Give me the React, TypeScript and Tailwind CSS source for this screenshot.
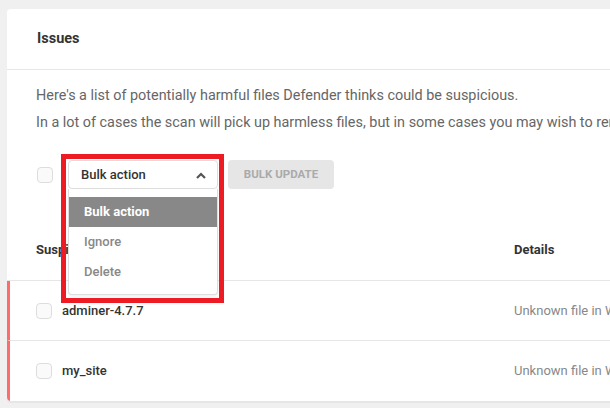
import React from 'react';

const font = { fontFamily: 'Roboto, "Liberation Sans", sans-serif' };

function Checkbox() {
  return <span className="block w-4 h-4 shrink-0 rounded-[4px] border border-[#dddddd] bg-[#fafafa]" />;
}

const ROWS = ['adminer-4.7.7', 'my_site'];

export default function App() {
  return (
    <div style={font} className="w-[610px] h-[408px] overflow-hidden bg-[#f0f0f0] pt-[9px] pl-[7px]">
      <div className="w-[660px] bg-white rounded-[4px] shadow-[0_2px_0_#e6e6e6]">
        <div className="h-[61px] flex items-center px-[30px] border-b border-[#e6e6e6]">
          <h2 className="text-[14.5px] font-bold text-[#333333]">Issues</h2>
        </div>

        <div className="pl-[29px] pt-[12px]">
          <p className="text-[14.4px] leading-[27px] text-[#666666] whitespace-nowrap">
            Here's a list of potentially harmful files Defender thinks could be suspicious.
          </p>
          <p className="text-[14.4px] leading-[27px] text-[#666666] whitespace-nowrap">
            In a lot of cases the scan will pick up harmless files, but in some cases you may wish to remove the files just in case.
          </p>

          <div className="mt-[24px] flex items-center">
            <span className="ml-px"><Checkbox /></span>
            <div className="relative ml-[15px]">
              <div className="w-[150px] h-[29px] flex items-center justify-between pl-[12px] pr-[11px] border border-[#dddddd] rounded-[4px] bg-white">
                <span className="text-[13px] font-medium text-[#333333]">Bulk action</span>
                <svg width="10" height="7" viewBox="0 0 10 7" className="mt-px">
                  <path d="M1 6 L5 2 L9 6" fill="none" stroke="#555555" strokeWidth="2.2" />
                </svg>
              </div>
              <div className="absolute left-0 top-full z-10 w-[150px] pt-[8px] pb-[7px] bg-white border border-t-0 border-[#dddddd] rounded-b-[4px] shadow-[0_2px_3px_rgba(0,0,0,0.06)]">
                <div className="h-[30px] flex items-center pl-[15px] bg-[#888888] text-[13px] font-bold text-white">Bulk action</div>
                <div className="h-[30px] flex items-center pl-[15px] text-[13px] font-medium text-[#888888]">Ignore</div>
                <div className="h-[30px] flex items-center pl-[15px] text-[13px] font-medium text-[#888888]">Delete</div>
              </div>
              <div className="absolute -left-[7px] -top-[6px] z-20 w-[163px] h-[149px] border-[5px] border-[#ed1c24] pointer-events-none" />
            </div>
            <button className="ml-[10px] w-[106px] h-[29px] rounded-[4px] bg-[#e6e6e6] text-[11.5px] font-bold uppercase text-[#aaaaaa]">
              Bulk update
            </button>
          </div>
        </div>

        <div className="mt-[30px] h-[62px] flex items-center pl-[29px] border-b border-[#e6e6e6] text-[13px] font-bold text-[#333333]">
          <span className="w-[478px] shrink-0">Suspicious file</span>
          <span>Details</span>
        </div>

        <div className="overflow-hidden rounded-bl-[4px]">
          {ROWS.map((name, i) => (
            <div
              key={name}
              className={`h-[60px] flex items-center pl-[26px] border-l-[3px] border-l-[#ff6b6b] ${i < ROWS.length - 1 ? 'border-b border-b-[#e6e6e6]' : ''}`}
            >
              <Checkbox />
              <span className="ml-[10px] w-[452px] shrink-0 text-[13px] font-medium text-[#333333]">{name}</span>
              <span className="text-[13px] text-[#888888] whitespace-nowrap">Unknown file in WordPress core</span>
            </div>
          ))}
        </div>
      </div>
    </div>
  );
}
